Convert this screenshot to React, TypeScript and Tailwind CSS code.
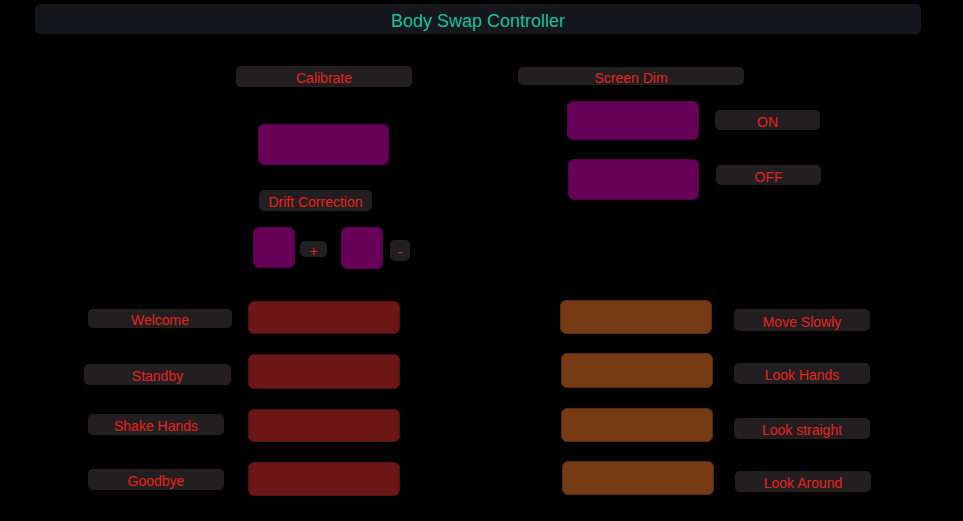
import React from "react";

const labelBase =
  "flex shrink-0 items-center justify-center rounded-[5px] bg-[#231f20] pt-[3px] text-[14px] leading-none text-[#e8231f]";
const purple = "shrink-0 rounded-[6px] bg-[#660058] border border-[#520047]";
const red = "shrink-0 rounded-[6px] bg-[#6c1716] border border-[#531110]";
const orange = "shrink-0 rounded-[6px] bg-[#763a15] border border-[#5c2c10]";

function Label({ className, children }: { className: string; children: React.ReactNode }) {
  return <div className={`${labelBase} ${className}`}>{children}</div>;
}

export default function App() {
  return (
    <div
      className="flex flex-col w-[963px] h-[521px] bg-black overflow-hidden"
      style={{ fontFamily: '"Liberation Sans", Arial, sans-serif' }}
    >
      {/* Header */}
      <div className="ml-[35px] mt-[4px] w-[886px] h-[30px] shrink-0 rounded-[5px] bg-[#15171c] flex items-center justify-center pt-[4px]">
        <span className="text-[18px] text-[#19c0a0] leading-none">Body Swap Controller</span>
      </div>

      {/* Top section */}
      <div className="flex items-start">
        {/* Calibrate / Drift group */}
        <div className="ml-[236px] mt-[32px] flex flex-col items-start w-[176px]">
          <Label className="w-[176px] h-[21px]">Calibrate</Label>
          <div className={`${purple} ml-[22px] mt-[37px] w-[131px] h-[41px]`} />
          <Label className="ml-[23px] mt-[25px] w-[113px] h-[21px]">Drift Correction</Label>
          <div className="ml-[17px] mt-[16px] flex items-start">
            <div className={`${purple} w-[42px] h-[41px]`} />
            <Label className="ml-[5px] mt-[14px] w-[27px] h-[16px]">+</Label>
            <div className={`${purple} ml-[14px] w-[42px] h-[42px]`} />
            <Label className="ml-[7px] mt-[13px] w-[20px] h-[21px]">-</Label>
          </div>
        </div>

        {/* Screen Dim group */}
        <div className="ml-[106px] mt-[33px] flex flex-col items-start">
          <Label className="w-[226px] h-[18px]">Screen Dim</Label>
          <div className="ml-[49px] mt-[16px] flex items-start">
            <div className={`${purple} w-[132px] h-[39px]`} />
            <Label className="ml-[16px] mt-[9px] w-[105px] h-[20px]">ON</Label>
          </div>
          <div className="ml-[50px] mt-[19px] flex items-start">
            <div className={`${purple} w-[131px] h-[41px]`} />
            <Label className="ml-[17px] mt-[6px] w-[105px] h-[20px]">OFF</Label>
          </div>
        </div>
      </div>

      {/* Bottom section */}
      <div className="flex items-start">
        {/* Left column */}
        <div className="ml-[84px] mt-[32px] flex flex-col gap-[20px]">
          <div className="flex items-start">
            <Label className="ml-[4px] mt-[8px] w-[144px] h-[19px]">Welcome</Label>
            <div className={`${red} ml-[16px] w-[152px] h-[33px]`} />
          </div>
          <div className="flex items-start">
            <Label className="mt-[10px] w-[147px] h-[21px]">Standby</Label>
            <div className={`${red} ml-[17px] w-[152px] h-[35px]`} />
          </div>
          <div className="flex items-start">
            <Label className="ml-[4px] mt-[5px] w-[136px] h-[21px]">Shake Hands</Label>
            <div className={`${red} ml-[24px] w-[152px] h-[33px]`} />
          </div>
          <div className="flex items-start">
            <Label className="ml-[4px] mt-[7px] w-[136px] h-[21px]">Goodbye</Label>
            <div className={`${red} ml-[24px] w-[152px] h-[34px]`} />
          </div>
        </div>

        {/* Right column */}
        <div className="ml-[160px] mt-[31px] flex flex-col">
          <div className="flex items-start">
            <div className={`${orange} w-[152px] h-[34px]`} />
            <Label className="ml-[22px] mt-[9px] w-[136px] h-[22px]">Move Slowly</Label>
          </div>
          <div className="mt-[19px] ml-[1px] flex items-start">
            <div className={`${orange} w-[152px] h-[35px]`} />
            <Label className="ml-[21px] mt-[10px] w-[136px] h-[21px]">Look Hands</Label>
          </div>
          <div className="mt-[20px] ml-[1px] flex items-start">
            <div className={`${orange} w-[152px] h-[34px]`} />
            <Label className="ml-[21px] mt-[10px] w-[136px] h-[21px]">Look straight</Label>
          </div>
          <div className="mt-[19px] ml-[2px] flex items-start">
            <div className={`${orange} w-[152px] h-[34px]`} />
            <Label className="ml-[21px] mt-[10px] w-[136px] h-[21px]">Look Around</Label>
          </div>
        </div>
      </div>
    </div>
  );
}
